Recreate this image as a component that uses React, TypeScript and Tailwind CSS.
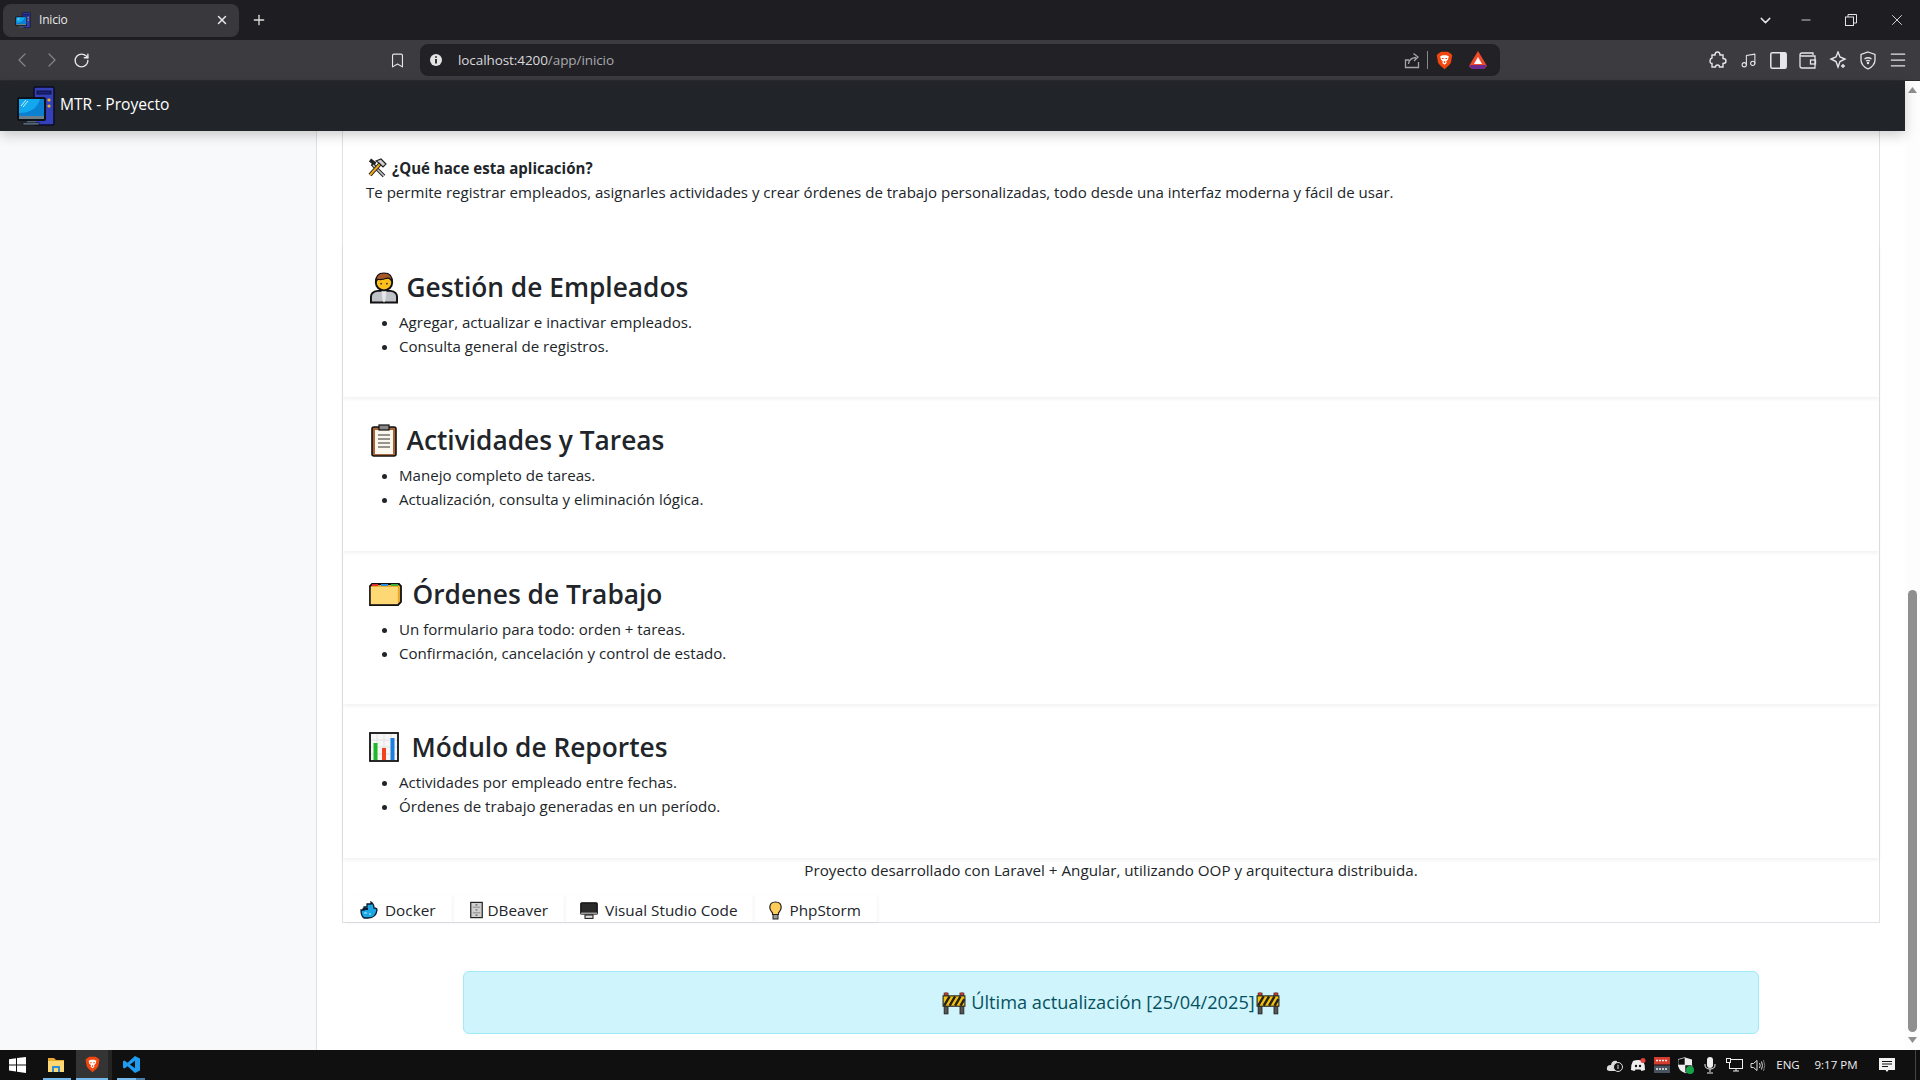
import React from "react";
import { ChevronLeft, ChevronRight, RotateCw, Bookmark, X, Plus, ChevronDown, Minus, Music, Menu } from "lucide-react";

const Computer = ({ s = 40 }: { s?: number }) => (
  <svg width={s} height={s} viewBox="0 0 40 40">
    <rect x="18" y="1" width="20" height="38" rx="1.5" fill="#3340b8" stroke="#0b0b20" strokeWidth="1.5" />
    <rect x="21" y="5" width="14" height="3" fill="#1c2480" stroke="#0b0b20" strokeWidth=".8" />
    <circle cx="33" cy="14" r="1.6" fill="#f2b01e" /><circle cx="33" cy="20" r="1.6" fill="#f2b01e" />
    <rect x="1" y="11" width="29" height="24" rx="2" fill="#0e1118" />
    <rect x="3" y="13" width="25" height="17" fill="#12a8ee" />
    <path d="M3 30 L3 27 Q20 27 24 13 L28 13 L28 30 Z" fill="#0b7fd0" />
    <path d="M5 20 L10 14 M7 21 L12 15" stroke="#c7efff" strokeWidth="1" />
    <rect x="3" y="30" width="25" height="3" fill="#6b7f8c" />
    <rect x="11" y="35" width="9" height="2" fill="#55656f" /><rect x="7" y="36.5" width="16" height="2.5" fill="#55656f" stroke="#0b0b20" strokeWidth=".5" />
  </svg>
);

const BraveIcon = ({ s = 18 }: { s?: number }) => (
  <svg width={s} height={s} viewBox="0 0 20 22">
    <path d="M3 3 L6 1 H14 L17 3 L19 5 L17.5 13 Q16.5 16 10 21 Q3.5 16 2.5 13 L1 5 Z" fill="#f1470f" />
    <path d="M5 6 L8 5 H12 L15 6 L14 10 L12 12 L12.5 14 L10 16 L7.5 14 L8 12 L6 10 Z" fill="#fff" />
    <path d="M7 8 h2 v1.4 h-2 Z M11 8 h2 v1.4 h-2 Z M9.2 12 h1.6 v2 h-1.6 Z" fill="#f1470f" />
  </svg>
);

const Tools = () => (
  <svg width="20" height="20" viewBox="0 0 20 20">
    <path d="M3 2 L7 5 L6 7 L17 18" stroke="#222" strokeWidth="3.6" fill="none" />
    <path d="M6 7 L17 18" stroke="#c9c9c9" strokeWidth="1.6" />
    <path d="M3 17 L13 6" stroke="#222" strokeWidth="4" />
    <path d="M3 17 L13 6" stroke="#eda81a" strokeWidth="2" />
    <path d="M9 3 L14 1 L19 6 L16 9 L12 5 Z" fill="#cfcfcf" stroke="#222" strokeWidth="1.2" />
  </svg>
);

const Person = () => (
  <svg width="28" height="33" viewBox="0 0 29 33">
    <path d="M1 32 V26 Q1 21 8 20 H21 Q28 21 28 26 V32 Z" fill="#bfc3c7" stroke="#111" strokeWidth="2" />
    <path d="M12 20 H17 L16 30 L14.5 32 L13 30 Z" fill="#e4e6e8" />
    <circle cx="14.5" cy="11" r="8.5" fill="#fcc21b" stroke="#111" strokeWidth="2" />
    <path d="M6 11 Q5.5 1.5 14.5 1.5 Q23.5 1.5 23 11 Q21 6 17 7 Q12 9 8 8 Z" fill="#a6582a" stroke="#111" strokeWidth="1.2" />
    <circle cx="11.5" cy="12.5" r=".9" fill="#333" /><circle cx="17.5" cy="12.5" r=".9" fill="#333" />
  </svg>
);

const Clipboard = () => (
  <svg width="28" height="33" viewBox="0 0 28 33">
    <rect x="2" y="3" width="24" height="29" rx="2" fill="#a8643a" stroke="#111" strokeWidth="1.6" />
    <rect x="5" y="6" width="18" height="24" fill="#fbf7ec" />
    <rect x="9" y="1" width="10" height="5" fill="#888" stroke="#111" strokeWidth="1.2" />
    <path d="M8 11 H20 M8 15 H20 M8 19 H20 M8 23 H20" stroke="#333" strokeWidth="1.2" />
  </svg>
);

const Folder = () => (
  <svg width="33" height="24" viewBox="0 0 33 24" className="ml-[3px] shrink-0">
    <path d="M1 23 V4 L3 2 H30 L32 4 V20 L29 23 Z" fill="#e8a92f" stroke="#111" strokeWidth="1.8" />
    <path d="M3 2 H9 V4 H3 Z" fill="#d9302c" /><path d="M12 2 H19 V4 H12 Z" fill="#2d8de0" /><path d="M22 2 H29 V4 H22 Z" fill="#3fae3a" />
    <rect x="1.8" y="5" width="27" height="17.2" fill="#ffd876" />
  </svg>
);

const Chart = () => (
  <svg width="30" height="30" viewBox="0 0 30 30">
    <rect x="1" y="1" width="28" height="28" fill="#f6f6f6" stroke="#111" strokeWidth="1.8" />
    <path d="M8 2 V28 M15 2 V28 M22 2 V28 M2 8 H28 M2 15 H28 M2 22 H28" stroke="#dedede" strokeWidth=".8" />
    <rect x="4.5" y="11" width="4" height="17" fill="#20b82a" />
    <rect x="13" y="16" width="4" height="12" fill="#f0441f" />
    <rect x="21.5" y="6" width="4" height="22" fill="#1a7fe0" />
  </svg>
);

const Whale = () => (
  <svg width="18" height="18" viewBox="0 0 18 18">
    <path d="M1 9 H4 V6 H7 V3 H11 V1 Q14 3 14 7 Q17 7 17 9 Q16 17 8 17 H4 Q1 15 1 9 Z" fill="#1ba6e6" stroke="#0b1a2c" strokeWidth="1.3" />
    <path d="M2.5 7 H8 V9 H2.5 Z" fill="#0b1a2c" /><path d="M4 12 H7 M9 13 H11" stroke="#bdeaff" strokeWidth="1.2" />
  </svg>
);

const Cabinet = () => (
  <svg width="13" height="18" viewBox="0 0 14 18" className="ml-[2px] mr-[-2px]">
    <rect x=".8" y=".8" width="12.4" height="16.4" fill="#cfcfcf" stroke="#222" strokeWidth="1.3" />
    <path d="M3 6 H11 M3 12 H11" stroke="#888" /><path d="M6 3.5 H8 M6 9 H8 M6 14.5 H8" stroke="#555" strokeWidth="1.2" />
  </svg>
);

const Monitor = () => (
  <svg width="18" height="17" viewBox="0 0 18 17">
    <rect x=".8" y=".8" width="16.4" height="11.4" rx="1" fill="#2a2a2a" stroke="#111" strokeWidth="1.3" />
    <rect x="1" y="10.5" width="16" height="2" fill="#9a9a9a" />
    <rect x="5" y="13" width="8" height="3.4" fill="#ddd" stroke="#111" />
  </svg>
);

const Bulb = () => (
  <svg width="13" height="19" viewBox="0 0 13 19">
    <path d="M6.5 1 Q12.2 1 12.2 6.4 Q12.2 9 9.5 12 V13.5 H3.5 V12 Q.8 9 .8 6.4 Q.8 1 6.5 1 Z" fill="#ffcc5c" stroke="#222" strokeWidth="1.2" />
    <rect x="4" y="13.5" width="5" height="4.5" fill="#999" stroke="#222" />
  </svg>
);

const Barrier = () => (
  <svg width="24" height="23" viewBox="0 0 22 21">
    <rect x="2" y="1" width="3.5" height="19" fill="#555" stroke="#222" strokeWidth=".8" />
    <rect x="16.5" y="1" width="3.5" height="19" fill="#555" stroke="#222" strokeWidth=".8" />
    <circle cx="3.7" cy="1.8" r="1.5" fill="#c5372c" /><circle cx="18.3" cy="1.8" r="1.5" fill="#c5372c" />
    <rect x="1" y="3.5" width="20" height="9.5" fill="#f4c20d" stroke="#222" />
    <path d="M2 12.5 L7 4 M7 12.5 L12 4 M12 12.5 L17 4 M17 12.5 L20.5 6.5" stroke="#222" strokeWidth="2.2" />
  </svg>
);

const Sec = ({ icon, title, items, gap = "gap-[8px]" }: { icon: React.ReactNode; title: string; items: string[]; gap?: string }) => (
  <section className="h-[153.4px] pt-[26px] shadow-[0_2px_4px_rgba(0,0,0,0.06)] pl-[24px]">
    <h3 className={`flex items-center ${gap} h-[34px] pl-[1.5px] text-[26.3px] font-semibold leading-[34px] text-[#212529] mb-[6px]`}>
      <span className="flex w-[30px] justify-center shrink-0">{icon}</span>
      {title}
    </h3>
    <ul className="list-disc pl-[32px] text-[15.1px] leading-[24px]">
      {items.map((t) => <li key={t}>{t}</li>)}
    </ul>
  </section>
);

const Tool = ({ icon, label }: { icon: React.ReactNode; label: string }) => (
  <div className="flex h-[27px] items-center gap-[7px] px-[16px] pt-[4px] shadow-[1px_1px_3px_rgba(0,0,0,0.05)]">
    {icon}
    <span>{label}</span>
  </div>
);

const ToolIcon = ({ children }: { children: React.ReactNode }) => (
  <span className="flex w-[30px] items-center justify-center text-[#e6e6e8]">{children}</span>
);

export default function App() {
  return (
    <div className="flex h-screen w-screen flex-col overflow-hidden bg-white text-[#212529] font-['Open_Sans','Noto_Sans',sans-serif]">
      {/* tab strip */}
      <div className="flex h-[40px] shrink-0 items-center bg-[#1e1e22] pl-[3px] text-white">
        <div className="flex h-[33px] w-[236px] items-center gap-[8px] rounded-[8px] bg-[#38383d] pl-[12px] pr-[10px] text-[12px] tracking-[-0.2px] text-[#e8e8e8]">
          <Computer s={16} />
          <span className="flex-1">Inicio</span>
          <X size={14} strokeWidth={2.5} />
        </div>
        <Plus size={16} strokeWidth={2} className="ml-[12px] text-[#ddd]" />
        <div className="flex-1" />
        <div className="flex items-center text-[#e4e4e4]">
          <span className="flex w-[45px] justify-center pl-[9px]"><ChevronDown size={17} strokeWidth={2} /></span>
          <span className="flex w-[45px] justify-center"><Minus size={14} strokeWidth={1.5} /></span>
          <span className="flex w-[46px] justify-center">
            <svg width="12" height="12" viewBox="0 0 12 12" fill="none" stroke="currentColor"><rect x=".5" y="3" width="8" height="8.5" /><path d="M3 3 V.5 H11.5 V9 H8.5" /></svg>
          </span>
          <span className="flex w-[46px] justify-center"><X size={18} strokeWidth={1.2} /></span>
        </div>
      </div>
      {/* toolbar */}
      <div className="flex h-[41px] shrink-0 items-center border-b border-[#2c2c30] bg-[#3b3b40] text-[#e6e6e8]">
        <div className="flex w-[100px] items-center pl-[10px]">
          <ChevronLeft size={24} strokeWidth={1.2} className="text-[#85858a]" />
          <ChevronRight size={24} strokeWidth={1.2} className="ml-[6px] text-[#85858a]" />
          <RotateCw size={17} strokeWidth={2} className="ml-[9px]" />
        </div>
        <div className="flex w-[320px] justify-end pr-[14px]"><Bookmark size={17} strokeWidth={1.6} /></div>
        <div className="flex h-[32px] w-[1080px] items-center rounded-[8px] bg-[#222226] pl-[9px] pr-[12px]">
          <svg width="14" height="14" viewBox="0 0 14 14"><circle cx="7" cy="7" r="6" fill="#e4e4e4" /><path d="M7 6 V10.5 M7 3.2 V4.8" stroke="#222226" strokeWidth="1.8" /></svg>
          <span className="ml-[15px] flex-1 text-[13.5px] tracking-[-0.08px] text-[#d8d8dc]">localhost:4200<span className="text-[#a9a9ae]">/app/inicio</span></span>
          <svg width="16" height="17" viewBox="0 0 16 17" fill="none" stroke="#a6a6aa" strokeWidth="1.3"><path d="M14.5 10 V15.5 H1.5 V8 H5" /><path d="M4.5 12 Q5 6 12 5.5 M9.5 1.5 L14 5 L10 9" /></svg>
          <div className="mx-[7px] h-[18px] w-px bg-[#8a8a8e]" />
          <BraveIcon s={19} />
          <svg width="20" height="18" viewBox="0 0 20 18" className="ml-[14px]"><path d="M10 0 L19 15 L16 18 H4 L1 15 Z" fill="#f24a28" /><path d="M1 14 L4 18 H16 L19 14 Z" fill="#6a2a8e" /><path d="M10 6 L14 13 H6 Z" fill="#fff" /></svg>
        </div>
        <div className="flex flex-1 items-center justify-end pr-[7px]">
          <ToolIcon><svg width="18" height="18" viewBox="0 0 18 18" fill="none" stroke="currentColor" strokeWidth="1.4"><path d="M6 4 Q6 1 8.5 1 Q11 1 11 4 H14 V7.5 Q17 7.5 17 10 Q17 12.5 14 12.5 V16 H10.5 Q10.5 14 8.5 14 Q6.5 14 6.5 16 H3 V12.5 Q1 12.5 1 10 Q1 7.5 3 7 V4 Z" /></svg></ToolIcon>
          <span className="flex w-[30px] justify-center text-[#e6e6e8]"><Music size={17} strokeWidth={1.5} /></span>
          <ToolIcon><svg width="17" height="17" viewBox="0 0 17 17"><rect x=".8" y=".8" width="15.4" height="15.4" rx="1.5" fill="none" stroke="currentColor" strokeWidth="1.5" /><rect x="10" y="1" width="6" height="15" fill="currentColor" /></svg></ToolIcon>
          <ToolIcon><svg width="18" height="17" viewBox="0 0 18 17" fill="none" stroke="currentColor" strokeWidth="1.3"><path d="M1 3 Q1 1 3 1 H14 V3 M1 3 V14 Q1 16 3 16 H16 V4 H3 Q1 4 1 3 Z" /><rect x="11.5" y="8" width="5" height="4" /></svg></ToolIcon>
          <ToolIcon><svg width="18" height="18" viewBox="0 0 18 18" fill="none" stroke="currentColor" strokeWidth="1.4"><path d="M9 1 L11 6 L16 8 L11 10.5 L9 16 L7 10.5 L2 8 L7 6 Z" /><path d="M14 13 V17 M12 15 H16" /></svg></ToolIcon>
          <ToolIcon><svg width="16" height="19" viewBox="0 0 16 19" fill="none" stroke="currentColor" strokeWidth="1.3"><path d="M8 1 L15 3.5 V9 Q15 14.5 8 18 Q1 14.5 1 9 V3.5 Z" /><path d="M4.5 8 Q8 5.5 11.5 8 M6 10 Q8 8.6 10 10" /><circle cx="8" cy="12" r=".6" /></svg></ToolIcon>
          <span className="flex w-[30px] justify-center text-[#e6e6e8]"><Menu size={20} strokeWidth={1.5} /></span>
        </div>
      </div>
      {/* page */}
      <div className="flex min-h-0 flex-1">
        <div className="flex min-w-0 flex-1 flex-col">
          <header className="relative z-10 flex h-[50px] shrink-0 items-center gap-[4px] bg-[#212529] pl-[16px] text-[15.6px] text-white shadow-[0_4px_12px_rgba(0,0,0,0.2)]">
            <Computer s={40} />
            <span className="mb-[2px]">MTR - Proyecto</span>
          </header>
          <div className="flex min-h-0 flex-1">
            <aside className="w-[317px] shrink-0 border-r border-[#dee2e6] bg-[#f8f9fa]" />
            <main className="min-w-0 flex-1 overflow-hidden bg-white px-[25px]">
              <div className="border-x border-b border-[#dee2e6]">
                <div className="h-[113px] pl-[23px] pt-[25px] text-[15.05px] leading-[24px]">
                  <p className="flex items-center gap-[5px] font-bold"><span className="ml-[1px] flex"><Tools /></span><span>¿Qué hace esta aplicación?</span></p>
                  <p>Te permite registrar empleados, asignarles actividades y crear órdenes de trabajo personalizadas, todo desde una interfaz moderna y fácil de usar.</p>
                </div>
                <Sec icon={<Person />} title="Gestión de Empleados" items={["Agregar, actualizar e inactivar empleados.", "Consulta general de registros."]} />
                <Sec icon={<Clipboard />} title="Actividades y Tareas" items={["Manejo completo de tareas.", "Actualización, consulta y eliminación lógica."]} />
                <Sec icon={<Folder />} title="Órdenes de Trabajo" gap="gap-[14px]" items={["Un formulario para todo: orden + tareas.", "Confirmación, cancelación y control de estado."]} />
                <Sec icon={<Chart />} title="Módulo de Reportes" gap="gap-[13px]" items={["Actividades por empleado entre fechas.", "Órdenes de trabajo generadas en un período."]} />
                <p className="h-[37px] text-center text-[15.2px] leading-[24px]">Proyecto desarrollado con Laravel + Angular, utilizando OOP y arquitectura distribuida.</p>
                <div className="flex pl-[1px] text-[15.3px]">
                  <Tool icon={<Whale />} label="Docker" />
                  <Tool icon={<Cabinet />} label="DBeaver" />
                  <Tool icon={<Monitor />} label="Visual Studio Code" />
                  <Tool icon={<Bulb />} label="PhpStorm" />
                </div>
              </div>
              <div className="mx-auto mt-[48px] flex h-[63px] w-[1296px] items-center justify-center rounded-[6px] border border-[#9eeaf9] bg-[#cff4fc] pt-[2px] text-[18.2px] text-[#055160]">
                <Barrier />
                <span className="ml-[5px] mr-[1px]">Última actualización [25/04/2025]</span>
                <Barrier />
              </div>
            </main>
          </div>
        </div>
        {/* scrollbar */}
        <div className="flex w-[15px] shrink-0 flex-col items-center bg-[#fdfdfd] pb-[2px]">
          <svg width="9" height="6" viewBox="0 0 9 6" className="mt-[6px]"><path d="M4.5 0 L9 6 H0 Z" fill="#8f8f8f" /></svg>
          <div className="flex-1" />
          <div className="h-[442px] w-[9px] rounded-full bg-[#8f8f8f]" />
          <svg width="9" height="6" viewBox="0 0 9 6" className="mt-[5px] mb-[5px]"><path d="M4.5 6 L9 0 H0 Z" fill="#8f8f8f" /></svg>
        </div>
      </div>
      {/* taskbar */}
      <footer className="flex h-[30px] shrink-0 items-center bg-[#101010] text-[12px] text-[#eee]">
        <span className="flex w-[35px] justify-center">
          <svg width="17" height="16" viewBox="0 0 17 16" fill="#fff"><path d="M0 2.2 L7 1.2 V7.4 H0 Z M8 1 L17 0 V7.4 H8 Z M0 8.4 H7 V14.6 L0 13.6 Z M8 8.4 H17 V16 L8 14.8 Z" /></svg>
        </span>
        <span className="relative flex h-full w-[41px] items-center justify-center after:absolute after:bottom-0 after:left-[8px] after:h-[2px] after:w-[28px] after:bg-[#76b9ed]">
          <svg width="16" height="14" viewBox="0 0 16 14"><path d="M0 0 H6 L8 2 H16 V14 H0 Z" fill="#e8a92f" /><rect y="3" width="16" height="11" fill="#ffd874" /><path d="M4 14 V8 H12 V14 H10 V10 H6 V14 Z" fill="#2d8fd5" /></svg>
        </span>
        <span className="flex h-full w-[32px] items-center justify-center border-b-2 border-[#76b9ed] bg-[#343434]"><BraveIcon s={17} /></span>
        <span className="h-full w-[4px] bg-[#242424]" />
        <span className="relative ml-[5px] flex h-full w-[28px] items-center justify-center border-b-2 border-[#4a7ea8] after:absolute after:bottom-[-2px] after:left-0 after:h-[2px] after:w-[19px] after:bg-[#76b9ed]">
          <svg width="17" height="17" viewBox="0 0 17 17"><path d="M12 0 L17 2.5 V14.5 L12 17 L4.5 10.2 L1.5 12.5 L0 11.7 V5.3 L1.5 4.5 L4.5 6.8 Z M12 4.8 L7 8.5 L12 12.2 Z" fill="#1f9cf0" /></svg>
        </span>
        <div className="flex-1" />
        <div className="flex h-full items-center">
          <span className="flex w-[24px] justify-center"><svg width="17" height="14" viewBox="0 0 17 14"><path d="M1 12 Q0 7 5 7 Q6 2 11 3 V13 H3 Z" fill="#ddd" /><circle cx="12" cy="9" r="4.5" fill="#101010" stroke="#ddd" /><path d="M12 6.8 V11" stroke="#ddd" /></svg></span>
          <span className="flex w-[24px] justify-center"><svg width="16" height="14" viewBox="0 0 16 14"><path d="M3 3 Q8 1 13 3 Q15.5 7 15 12 L11.5 13 L10.5 11.5 H5.5 L4.5 13 L1 12 Q.5 7 3 3 Z" fill="#eee" /><circle cx="13" cy="2.5" r="2.5" fill="#e8413c" /><circle cx="6" cy="8" r="1.2" fill="#101010" /><circle cx="10" cy="8" r="1.2" fill="#101010" /></svg></span>
          <span className="flex w-[24px] justify-center"><svg width="16" height="16" viewBox="0 0 16 16"><rect width="16" height="7.5" fill="#d43c2e" /><rect y="8.5" width="16" height="7.5" fill="#49535e" /><path d="M2 3.5 H14 M2 12 H14" stroke="#eee" strokeWidth="1.4" strokeDasharray="2 1" /></svg></span>
          <span className="flex w-[24px] justify-center"><svg width="16" height="17" viewBox="0 0 16 17"><path d="M7 .5 L14 2.5 V8 Q14 13 7 16 Q0 13 0 8 V2.5 Z" fill="#eee" /><path d="M7 .5 V8 H0 V2.5 Z M7 8 H14 Q14 13 7 16 Z" fill="#101010" stroke="#eee" strokeWidth=".6" /><circle cx="12" cy="13" r="4" fill="#16a34a" /></svg></span>
          <span className="flex w-[24px] justify-center"><svg width="12" height="17" viewBox="0 0 12 17" fill="#eee"><rect x="3" y="0" width="6" height="11" rx="3" /><path d="M1 7 V8 Q1 12 6 12 Q11 12 11 8 V7 M6 12 V15 M3 16 H9" fill="none" stroke="#eee" /></svg></span>
          <span className="flex w-[24px] justify-center"><svg width="17" height="14" viewBox="0 0 17 14" fill="none" stroke="#eee"><rect x="3.5" y="1.5" width="13" height="9" /><rect x=".5" y=".5" width="4" height="4" fill="#101010" /><path d="M7 13 H13 M10 10.5 V13" /></svg></span>
          <span className="flex w-[24px] justify-center"><svg width="16" height="13" viewBox="0 0 16 13" fill="none" stroke="#ddd"><path d="M1 4.5 H3.5 L7 1.5 V11.5 L3.5 8.5 H1 Z" /><path d="M9.5 4 Q11 6.5 9.5 9 M11.5 2.5 Q13.5 6.5 11.5 10.5" /><path d="M13.5 1 Q16 6.5 13.5 12" stroke="#777" /></svg></span>
          <span className="ml-[2px] w-[32px] text-center text-[11.5px]">ENG</span>
          <span className="ml-[2px] w-[60px] text-center text-[11.5px]">9:17 PM</span>
          <span className="ml-[8px] flex w-[34px] justify-center pr-[8px]"><svg width="16" height="15" viewBox="0 0 16 15"><path d="M0 0 H16 V12 H9.5 L8 14 L6.5 12 H0 Z" fill="#f3f3f3" /><path d="M3 3.5 H13 M3 6 H13 M3 8.5 H9" stroke="#101010" /></svg></span>
          <span className="ml-[7px] mr-[4px] h-full w-px bg-[#444]" />
        </div>
      </footer>
    </div>
  );
}
